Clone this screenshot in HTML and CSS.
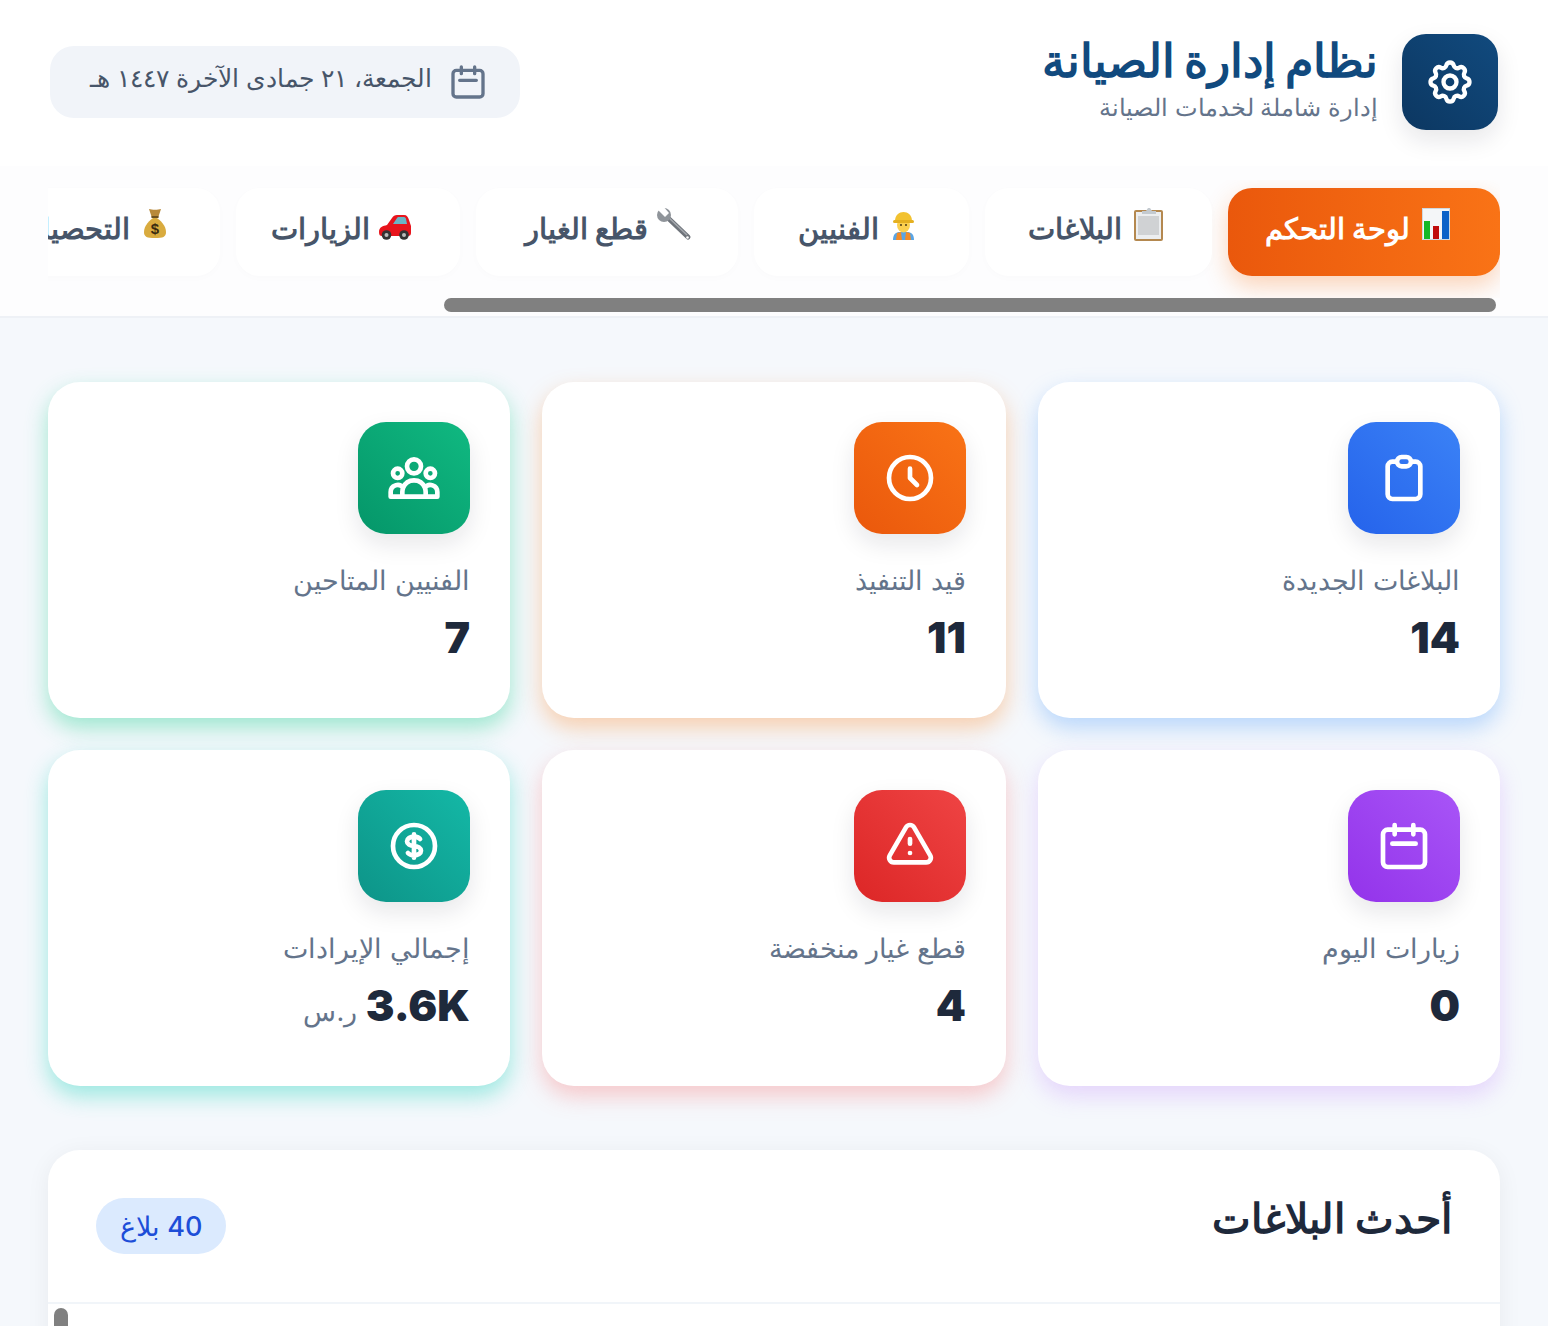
FILE: index.html
```html
<!DOCTYPE html>
<html lang="ar" dir="rtl">
<head>
    <meta charset="UTF-8">
    <meta name="viewport" content="width=device-width, initial-scale=1.0">
    <title>نظام إدارة الصيانة</title>
    <link rel="stylesheet" href="styles.css">
</head>
<body>
    <header class="top">
        <div class="brand-row">
            <div class="brand">
                <div class="logo">
                    <svg class="ic ic-52" viewBox="0 0 24 24"><path d="M10.325 4.317c.426-1.756 2.924-1.756 3.35 0a1.724 1.724 0 002.573 1.066c1.543-.94 3.31.826 2.37 2.37a1.724 1.724 0 001.065 2.572c1.756.426 1.756 2.924 0 3.35a1.724 1.724 0 00-1.066 2.573c.94 1.543-.826 3.31-2.37 2.37a1.724 1.724 0 00-2.572 1.065c-.426 1.756-2.924 1.756-3.35 0a1.724 1.724 0 00-2.573-1.066c-1.543.94-3.31-.826-2.37-2.37a1.724 1.724 0 00-1.065-2.572c-1.756-.426-1.756-2.924 0-3.35a1.724 1.724 0 001.066-2.573c-.94-1.543.826-3.31 2.37-2.37.996.608 2.296.07 2.572-1.065z"/><path d="M15 12a3 3 0 11-6 0 3 3 0 016 0z"/></svg>
                </div>
                <div class="brand-text">
                    <h1>نظام إدارة الصيانة</h1>
                    <p>إدارة شاملة لخدمات الصيانة</p>
                </div>
            </div>
            <div class="date-pill">
                <svg class="ic ic-40" viewBox="0 0 24 24"><path d="M8 7V3m8 4V3m-9 8h10M5 21h14a2 2 0 002-2V7a2 2 0 00-2-2H5a2 2 0 00-2 2v12a2 2 0 002 2z"/></svg>
                <span>الجمعة، ٢١ جمادى الآخرة ١٤٤٧ هـ</span>
            </div>
        </div>
        <nav class="tabs-wrap">
            <div class="tabs-scroll">
                <div class="tabs">
                    <a class="tab active">
                        <svg class="emo" viewBox="0 0 36 36"><rect x="6" y="2" width="28" height="32" fill="#cfd8de"/><rect x="7" y="3" width="26" height="30" fill="#f4f6f8"/><rect x="8" y="15" width="6" height="18" fill="#14b828"/><rect x="17" y="20" width="6" height="13" fill="#c00c0c"/><rect x="26" y="5" width="7" height="28" fill="#0c62c8"/></svg>
                        لوحة التحكم
                    </a>
                    <a class="tab">
                        <svg class="emo" viewBox="0 0 36 36"><rect x="6" y="4" width="29" height="31" rx="2" fill="#b4884f"/><rect x="8" y="6" width="25" height="27" fill="#eceef0"/><rect x="10" y="10" width="21" height="19" fill="#d0d2d4"/><path d="M14 8V5h4l2-3h2l2 3h4v3z" fill="#c3cad0"/></svg>
                        البلاغات
                    </a>
                    <a class="tab">
                        <svg class="emo" viewBox="0 0 36 36"><path d="M8 34c0-6 3-8 7-8h7c4 0 7 2 7 8z" fill="#5aa5e5"/><path d="M11 34l1-7 4-1 1 8zM26 34l-1-7-4-1-1 8z" fill="#f28c28"/><ellipse cx="18.5" cy="19" rx="6.5" ry="7.5" fill="#fbd04f"/><circle cx="16" cy="19" r=".9" fill="#3a2a10"/><circle cx="21" cy="19" r=".9" fill="#3a2a10"/><path d="M10 15C10 3 27 3 27 15z" fill="#f2c230"/><rect x="8" y="14" width="21" height="3" rx="1.5" fill="#e5b020"/></svg>
                        الفنيين
                    </a>
                    <a class="tab">
                        <svg class="emo" viewBox="0 0 36 36"><path d="M13 11l21 20" stroke="#6f747b" stroke-width="5" stroke-linecap="round"/><path d="M12 9l21 20" stroke="#a5a9ae" stroke-width="1.5"/><circle cx="10" cy="9" r="7" fill="#8f949a"/><path d="M11 11l4-4-7-8-5 4z" fill="#fff"/><circle cx="33.5" cy="31.5" r="1.3" fill="#fff"/></svg>
                        قطع الغيار
                    </a>
                    <a class="tab">
                        <svg class="emo" viewBox="0 0 36 36"><path d="M3 26c0-5 4-6 8-7l5-7c1-2 3-3 5-3h7c3 0 4 2 5 5l2 6v7c0 2-1 3-3 3H6c-2 0-3-1-3-4z" fill="#e8141c"/><path d="M17 18l4-6c.5-1 1-1 2-1h5c1 0 2 1 2 2l1 5z" fill="#6ab5c5"/><circle cx="10.500" cy="29" r="4.800" fill="#333"/><circle cx="10.500" cy="29" r="2" fill="#bbb"/><circle cx="28" cy="29" r="4.800" fill="#333"/><circle cx="28" cy="29" r="2" fill="#bbb"/></svg>
                        الزيارات
                    </a>
                    <a class="tab">
                        <svg class="emo" viewBox="0 0 36 36"><path d="M19 11c6 3 11 9 11 15 0 5-3 6-11 6s-11-1-11-6c0-6 5-12 11-15z" fill="#d9ab3e"/><path d="M13 3c3 1 9 1 12 0l-3 9h-6z" fill="#b8893a"/><rect x="15.500" y="10" width="7" height="2" fill="#6d5120"/><text class="emo-dollar" x="19" y="28" text-anchor="middle">$</text></svg>
                        التحصيل
                    </a>
                </div>
            </div>
            <div class="bar-thumb"></div>
        </nav>
    </header>

    <main class="content">
        <section class="cards">
            <div class="card card-blue">
                <div class="card-icon"><svg class="ic ic-56" viewBox="0 0 24 24"><path d="M9 5H7a2 2 0 00-2 2v12a2 2 0 002 2h10a2 2 0 002-2V7a2 2 0 00-2-2h-2M9 5a2 2 0 002 2h2a2 2 0 002-2M9 5a2 2 0 012-2h2a2 2 0 012 2"/></svg></div>
                <p class="card-label">البلاغات الجديدة</p>
                <p class="card-value">14</p>
            </div>
            <div class="card card-orange">
                <div class="card-icon"><svg class="ic ic-56" viewBox="0 0 24 24"><path d="M12 8v4l3 3m6-3a9 9 0 11-18 0 9 9 0 0118 0z"/></svg></div>
                <p class="card-label">قيد التنفيذ</p>
                <p class="card-value">11</p>
            </div>
            <div class="card card-green">
                <div class="card-icon"><svg class="ic ic-56" viewBox="0 0 24 24"><path d="M17 20h5v-2a3 3 0 00-5.356-1.857M17 20H7m10 0v-2c0-.656-.126-1.283-.356-1.857M7 20H2v-2a3 3 0 015.356-1.857M7 20v-2c0-.656.126-1.283.356-1.857m0 0a5.002 5.002 0 019.288 0M15 7a3 3 0 11-6 0 3 3 0 016 0zm6 3a2 2 0 11-4 0 2 2 0 014 0zM7 10a2 2 0 11-4 0 2 2 0 014 0z"/></svg></div>
                <p class="card-label">الفنيين المتاحين</p>
                <p class="card-value">7</p>
            </div>
            <div class="card card-purple">
                <div class="card-icon"><svg class="ic ic-56" viewBox="0 0 24 24"><path d="M8 7V3m8 4V3m-9 8h10M5 21h14a2 2 0 002-2V7a2 2 0 00-2-2H5a2 2 0 00-2 2v12a2 2 0 002 2z"/></svg></div>
                <p class="card-label">زيارات اليوم</p>
                <p class="card-value">0</p>
            </div>
            <div class="card card-red">
                <div class="card-icon"><svg class="ic ic-56" viewBox="0 0 24 24"><path d="M12 9v2m0 4h.01m-6.938 4h13.856c1.54 0 2.502-1.667 1.732-3L13.732 4c-.77-1.333-2.694-1.333-3.464 0L3.34 16c-.77 1.333.192 3 1.732 3z"/></svg></div>
                <p class="card-label">قطع غيار منخفضة</p>
                <p class="card-value">4</p>
            </div>
            <div class="card card-teal">
                <div class="card-icon"><svg class="ic ic-56" viewBox="0 0 24 24"><path d="M12 8c-1.657 0-3 .895-3 2s1.343 2 3 2 3 .895 3 2-1.343 2-3 2m0-8c1.11 0 2.08.402 2.599 1M12 8V7m0 1v8m0 0v1m0-1c-1.11 0-2.08-.402-2.599-1M21 12a9 9 0 11-18 0 9 9 0 0118 0z"/></svg></div>
                <p class="card-label">إجمالي الإيرادات</p>
                <p class="card-value">3.6K <small>ر.س</small></p>
            </div>
        </section>

        <section class="reports">
            <div class="reports-head">
                <h2>أحدث البلاغات</h2>
                <span class="badge">40 بلاغ</span>
            </div>
            <div class="reports-body">
                <div class="side-thumb"></div>
            </div>
        </section>
    </main>
</body>
</html>
```

FILE: styles.css
```css
*{
  box-sizing:border-box;
}
html,body{
  height:100%;
  overflow:hidden;
}
body{
  margin:0;
  background-color:#f5f8fc;
  font-family:'Inter','Noto Sans',sans-serif;
  color:#1e293b;
}
h1,h2,p{
  margin:0;
}
.ic{
  display:block;
  fill:none;
  stroke:currentColor;
  stroke-width:2;
  stroke-linecap:round;
  stroke-linejoin:round;
}
.ic-40{width:40px;height:40px;}
.ic-52{width:52px;height:52px;}
.ic-56{width:56px;height:56px;}

/* header */
.top{
  background-color:#fff;
  border-bottom:2px solid #eef1f6;
}
.brand-row{
  display:flex;
  justify-content:space-between;
  align-items:center;
  padding:34px 50px 36px;
}
.brand{
  display:flex;
  align-items:center;
  gap:24px;
}
.brand-text{
  padding-bottom:6px;
}
.logo{
  width:96px;
  height:96px;
  display:flex;
  align-items:center;
  justify-content:center;
  border-radius:24px;
  color:#fff;
  background:linear-gradient(to top right,#0c3761,#114a7e);
  box-shadow:0 10px 24px rgba(15,23,42,.1);
}
.brand h1{
  font-size:46px;
  line-height:52px;
  font-weight:900;
  color:#114a7e;
}
.brand p{
  margin-top:6px;
  font-size:23.5px;
  line-height:32px;
  color:#64748b;
}
.date-pill{
  display:flex;
  align-items:center;
  gap:16px;
  height:72px;
  width:470px;
  padding:0 32px 8px;
  border-radius:24px;
  background-color:#f1f4f9;
  color:#475569;
  font-size:25px;
  white-space:nowrap;
}
.date-pill .ic{
  color:#64748b;
  margin-top:8px;
}

/* tabs */
.tabs-wrap{
  padding:14px 48px 4px;
  background-color:#fdfdfe;
}
.tabs-scroll{
  overflow:hidden;
  padding:8px 0 22px;
}
.bar-thumb{
  height:14px;
  width:1052px;
  margin-right:4px;
  border-radius:7px;
  background-color:#808080;
}
.tabs{
  display:grid;
  grid-auto-flow:column;
  grid-template-columns:272px 227px 215px 262px 224px 240px;
  gap:16px;
}
.tab{
  display:flex;
  align-items:center;
  gap:6px;
  height:88px;
  padding:0 48px 8px 0;
  border-radius:24px;
  background-color:#fff;
  box-shadow:0 2px 8px rgba(15,23,42,.015);
  color:#475569;
  font-size:29px;
  font-weight:700;
  white-space:nowrap;
}
.tab.active{
  color:#fff;
  background:linear-gradient(to left,#f97316,#ea580c);
  box-shadow:0 10px 24px rgba(249,115,22,.3);
}
.emo{
  width:36px;
  height:36px;
  flex:none;
  margin-top:-8px;
  overflow:visible;
}
.emo-dollar{
  font-family:'Liberation Sans',sans-serif;
  font-size:15px;
  font-weight:700;
  fill:#3a2a10;
}

/* stat cards */
.content{
  padding:64px 48px 0;
}
.cards{
  display:grid;
  grid-template-columns:1fr 464px 1fr;
  gap:32px;
}
.card{
  height:336px;
  padding:40px;
  border-radius:32px;
  background-color:#fff;
}
.card-icon{
  width:112px;
  height:112px;
  display:flex;
  align-items:center;
  justify-content:center;
  border-radius:28px;
  color:#fff;
  box-shadow:0 10px 24px rgba(15,23,42,.1);
}
.card-label{
  margin-top:28px;
  font-size:27px;
  line-height:38px;
  color:#64748b;
}
.card-value{
  margin-top:8px;
  font-size:43px;
  line-height:58px;
  font-weight:900;
  color:#1e293b;
}
.card-value small{
  font-size:27px;
  font-weight:400;
  color:#64748b;
}
.card-blue{box-shadow:0 10px 22px rgba(96,165,250,.4);}
.card-blue .card-icon{background:linear-gradient(to top right,#2563eb,#3b82f6);}
.card-orange{box-shadow:0 10px 22px rgba(251,146,60,.4);}
.card-orange .card-icon{background:linear-gradient(to top right,#ea580c,#f97316);}
.card-green{box-shadow:0 10px 22px rgba(52,211,153,.45);}
.card-green .card-icon{background:linear-gradient(to top right,#059669,#10b981);}
.card-purple{box-shadow:0 10px 22px rgba(192,132,252,.3);}
.card-purple .card-icon{background:linear-gradient(to top right,#9333ea,#a855f7);}
.card-red{box-shadow:0 10px 22px rgba(248,113,113,.35);}
.card-red .card-icon{background:linear-gradient(to top right,#dc2626,#ef4444);}
.card-teal{box-shadow:0 10px 22px rgba(45,212,191,.45);}
.card-teal .card-icon{background:linear-gradient(to top right,#0d9488,#14b8a6);}

/* latest reports */
.reports{
  margin-top:64px;
  border-radius:32px;
  background-color:#fff;
  box-shadow:0 4px 24px rgba(15,23,42,.06);
  overflow:hidden;
}
.reports-head{
  display:flex;
  justify-content:space-between;
  align-items:center;
  height:154px;
  padding:0 48px;
  border-bottom:2px solid #f1f5f9;
}
.reports-head h2{
  padding-bottom:16px;
  font-size:41px;
  font-weight:700;
  color:#1e293b;
}
.badge{
  display:flex;
  align-items:center;
  height:56px;
  padding:0 24px;
  border-radius:28px;
  background-color:#dbeafe;
  color:#1d4ed8;
  font-size:27px;
  font-weight:500;
}
.reports-body{
  display:flex;
  padding:4px 0 0 6px;
}
.side-thumb{
  width:14px;
  height:60px;
  margin-right:auto;
  border-radius:7px;
  background-color:#808080;
}
```
